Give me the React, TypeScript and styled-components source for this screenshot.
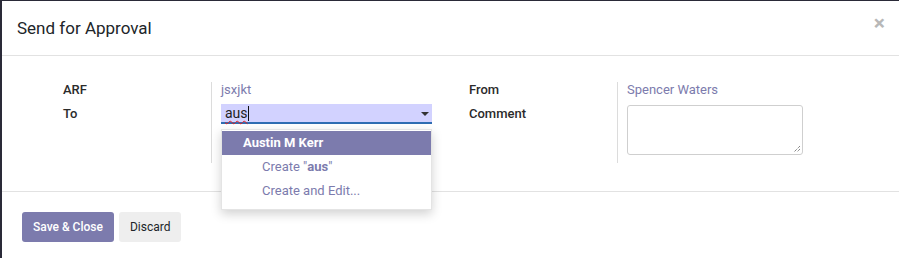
import React from 'react'
import styled, { createGlobalStyle } from 'styled-components'

const GlobalStyle = createGlobalStyle`
  html, body {
    margin: 0;
    padding: 0;
    background: #2a2a38;
    font-family: Roboto, "Noto Sans", sans-serif;
    font-size: 13px;
    color: #212529;
  }
`

const Modal = styled.div`
  margin: 1px 0 0 2px;
  background: #fff;
  height: 257px;
  overflow: hidden;
`

const Header = styled.div`
  height: 54px;
  display: flex;
  align-items: center;
  justify-content: space-between;
  padding: 0 15px;
  border-bottom: 1px solid #e2e2e2;
`

const Title = styled.h4`
  margin: 0;
  font-size: 17px;
  font-weight: 400;
  color: #212529;
`

const Close = styled.span`
  font-size: 21px;
  font-weight: 700;
  color: #b8b8b8;
  line-height: 1;
  margin-top: -9px;
  margin-right: -1px;
`

const Body = styled.div`
  padding: 26px 0 28px 61px;
  border-bottom: 1px solid #e2e2e2;
`

const Grid = styled.div`
  display: grid;
  grid-template-columns: 149px 237px 169px 237px;
  grid-template-rows: 22px 59px;
`

const Label = styled.div<{ $second?: boolean; $offset?: number }>`
  border-right: 1px solid #dcdcdc;
  font-weight: 500;
  color: #2b2b2b;
  line-height: 16px;
  padding-top: ${(p) => p.$offset ?? 0}px;
  margin-left: ${(p) => (p.$second ? '20px' : '0')};
`

const Cell = styled.div`
  padding-left: 9px;
  position: relative;
`

const LinkValue = styled.span`
  color: #7c7bad;
  line-height: 16px;
  display: inline-block;
`

const Input = styled.div`
  width: 211px;
  height: 18px;
  background: #d2d2ff;
  border-bottom: 2px solid #2f6db3;
  box-sizing: content-box;
  display: flex;
  align-items: center;
  justify-content: space-between;
`

const Typed = styled.span`
  padding-left: 4px;
  font-size: 14px;
  color: #222;
  text-decoration: underline wavy #e02020;
  text-decoration-thickness: 1px;
  text-underline-offset: 2px;
`

const Caret = styled.span`
  display: inline-block;
  width: 1px;
  height: 15px;
  background: #111;
  vertical-align: -3px;
`

const Arrow = styled.span`
  width: 0;
  height: 0;
  border-left: 4px solid transparent;
  border-right: 4px solid transparent;
  border-top: 4px solid #333;
  margin-right: 3px;
  margin-top: 2px;
`

const Dropdown = styled.ul`
  position: absolute;
  left: 9px;
  top: 25px;
  width: 209px;
  margin: 0;
  padding: 1px 0 6px;
  list-style: none;
  background: #fff;
  border: 1px solid #e4e4e4;
  box-shadow: 0 4px 10px rgba(0, 0, 0, 0.18);
  z-index: 2;
`

const Item = styled.li<{ $active?: boolean; $indent?: boolean }>`
  height: 24px;
  line-height: 24px;
  padding-left: ${(p) => (p.$indent ? '40px' : '21px')};
  background: ${(p) => (p.$active ? '#7c7bad' : 'transparent')};
  color: ${(p) => (p.$active ? '#fff' : '#7c7bad')};
  font-weight: ${(p) => (p.$active ? 700 : 400)};
  b {
    font-weight: 700;
  }
`

const TextArea = styled.div`
  margin-top: 1px;
  width: 174px;
  height: 48px;
  border: 1px solid #cfcfcf;
  border-radius: 3px;
  position: relative;
`

const Grip = styled.svg`
  position: absolute;
  right: 1px;
  bottom: 1px;
`

const Footer = styled.div`
  display: flex;
  gap: 5px;
  padding: 20px 20px;
`

const Button = styled.button<{ $primary?: boolean }>`
  font-family: inherit;
  font-size: 12px;
  height: 30px;
  padding: 0 11px;
  border: none;
  border-radius: 3px;
  background: ${(p) => (p.$primary ? '#7c7bad' : '#eeeeee')};
  color: ${(p) => (p.$primary ? '#fff' : '#212529')};
  font-weight: ${(p) => (p.$primary ? 500 : 400)};
`

export default function App() {
  return (
    <>
      <GlobalStyle />
      <Modal>
        <Header>
          <Title>Send for Approval</Title>
          <Close>×</Close>
        </Header>
        <Body>
          <Grid>
            <Label>ARF</Label>
            <Cell>
              <LinkValue>jsxjkt</LinkValue>
            </Cell>
            <Label $second>From</Label>
            <Cell>
              <LinkValue>Spencer Waters</LinkValue>
            </Cell>
            <Label $offset={2}>To</Label>
            <Cell>
              <Input>
                <span>
                  <Typed>aus</Typed>
                  <Caret />
                </span>
                <Arrow />
              </Input>
              <Dropdown>
                <Item $active>Austin M Kerr</Item>
                <Item $indent>
                  Create "<b>aus</b>"
                </Item>
                <Item $indent>Create and Edit...</Item>
              </Dropdown>
            </Cell>
            <Label $second $offset={2}>
              Comment
            </Label>
            <Cell>
              <TextArea>
                <Grip width="9" height="9" viewBox="0 0 9 9">
                  <path d="M8 2 L2 8 M8 5 L5 8" stroke="#555" strokeWidth="1" strokeDasharray="1 1" />
                </Grip>
              </TextArea>
            </Cell>
          </Grid>
        </Body>
        <Footer>
          <Button $primary>Save &amp; Close</Button>
          <Button>Discard</Button>
        </Footer>
      </Modal>
    </>
  )
}
